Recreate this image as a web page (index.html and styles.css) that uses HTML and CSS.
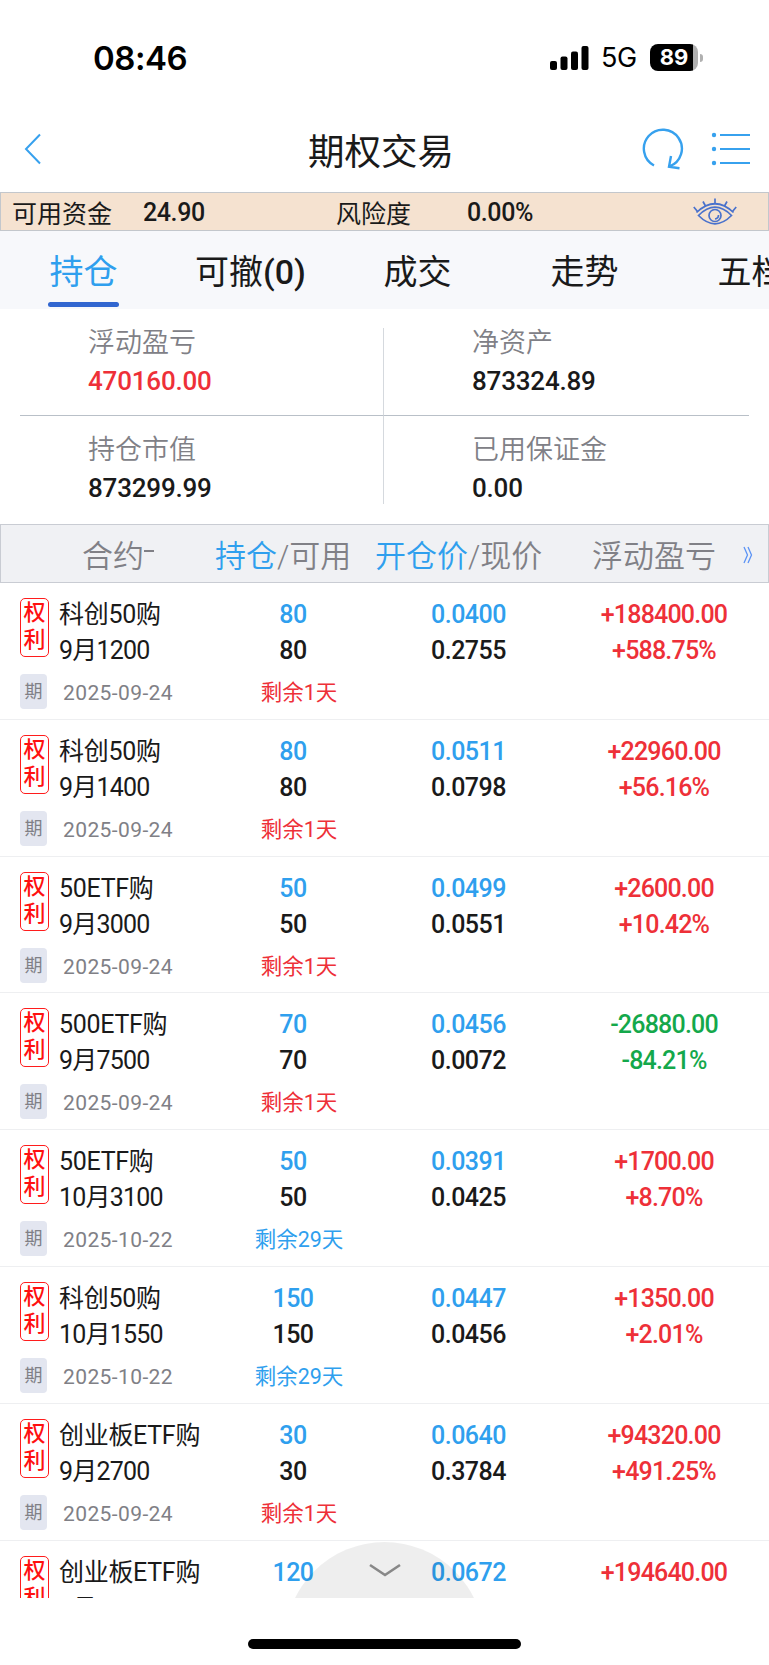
FILE: index.html
```
<!DOCTYPE html>
<html lang="zh-CN">
<head>
  <meta charset="UTF-8" />
  <meta name="viewport" content="width=device-width, initial-scale=1.0"/>
  <title>期权交易</title>
  <link rel="stylesheet" href="styles.css">
</head>
<body>
  <div class="status-bar">
    <span class="time">08:46</span>
    <div class="status-right">
      <svg class="signal" width="39" height="24" viewBox="0 0 39 24">
        <rect x="0" y="15" width="7" height="9" rx="2"/>
        <rect x="10.5" y="10.5" width="7" height="13.5" rx="2"/>
        <rect x="21" y="5.5" width="7" height="18.5" rx="2"/>
        <rect x="31.5" y="0" width="7" height="24" rx="2"/>
      </svg>
      <span class="network">5G</span>
      <div class="battery"><span>89</span></div>
      <i class="battery-cap"></i>
    </div>
  </div>

  <header class="nav-bar">
    <svg class="back" width="18" height="32" viewBox="0 0 18 32"><path d="M16 1.5 L2 16 L16 30.5"/></svg>
    <h1>期权交易</h1>
    <svg class="refresh" width="42" height="44" viewBox="0 0 42 44"><path d="M12 38.500 A19 19 0 1 1 27.500 39.500 M29 29 L27 39.800 L37.500 41.200"/></svg>
    <svg class="menu" width="40" height="34" viewBox="0 0 40 34">
      <path d="M9 3 H39 M9 17 H39 M9 31 H39"/>
      <circle cx="3" cy="3" r="2.2"/><circle cx="3" cy="17" r="2.2"/><circle cx="3" cy="31" r="2.2"/>
    </svg>
  </header>

  <div class="fund-bar">
    <span class="fund-label">可用资金</span>
    <span class="fund-value">24.90</span>
    <span class="risk-label">风险度</span>
    <span class="risk-value">0.00%</span>
    <svg class="eye" width="44" height="28" viewBox="0 0 44 28">
      <path d="M5.500 17.500 Q22 1 38.500 17.500 Q22 34 5.500 17.500 Z"/>
      <path d="M3.500 14.500 Q22 -3 40.500 14.500"/>
      <circle cx="22" cy="17.500" r="6"/>
      <path d="M22 21 Q25.500 20.500 25.500 17 M22 6 V0.500 M12.500 8 L10 3.500 M31.500 8 L34 3.500 M4.500 13.500 L0.800 9 M39.500 13.500 L43.200 9"/>
    </svg>
  </div>

  <nav class="tabs">
    <span class="tab active">持仓</span>
    <span class="tab">可撤<b>(0)</b></span>
    <span class="tab">成交</span>
    <span class="tab">走势</span>
    <span class="tab">五档</span>
  </nav>

  <section class="summary">
    <div class="cell"><label>浮动盈亏</label><strong class="red">470160.00</strong></div>
    <div class="cell"><label>净资产</label><strong>873324.89</strong></div>
    <div class="cell"><label>持仓市值</label><strong>873299.99</strong></div>
    <div class="cell"><label>已用保证金</label><strong>0.00</strong></div>
  </section>

  <div class="table-head">
    <span class="h-name">合约<i></i></span>
    <span class="h-hold"><em>持仓</em>/可用</span>
    <span class="h-price"><em>开仓价</em>/现价</span>
    <span class="h-profit">浮动盈亏</span>
    <svg class="more" width="10" height="18" viewBox="0 0 10 18"><path d="M1 1 L4.500 9 L1 17 M5 1 L8.500 9 L5 17"/></svg>
  </div>

  <main class="positions" id="positions"></main>

  <div class="home-area"><div class="home-indicator"></div></div>

<script>
  const positions = [
    { name: '科创50购', month: '9月1200', hold: 80, open: '0.0400', now: '0.2755', profit: '+188400.00', rate: '+588.75%', date: '2025-09-24', days: 1 },
    { name: '科创50购', month: '9月1400', hold: 80, open: '0.0511', now: '0.0798', profit: '+22960.00', rate: '+56.16%', date: '2025-09-24', days: 1 },
    { name: '50ETF购', month: '9月3000', hold: 50, open: '0.0499', now: '0.0551', profit: '+2600.00', rate: '+10.42%', date: '2025-09-24', days: 1 },
    { name: '500ETF购', month: '9月7500', hold: 70, open: '0.0456', now: '0.0072', profit: '-26880.00', rate: '-84.21%', date: '2025-09-24', days: 1 },
    { name: '50ETF购', month: '10月3100', hold: 50, open: '0.0391', now: '0.0425', profit: '+1700.00', rate: '+8.70%', date: '2025-10-22', days: 29 },
    { name: '科创50购', month: '10月1550', hold: 150, open: '0.0447', now: '0.0456', profit: '+1350.00', rate: '+2.01%', date: '2025-10-22', days: 29 },
    { name: '创业板ETF购', month: '9月2700', hold: 30, open: '0.0640', now: '0.3784', profit: '+94320.00', rate: '+491.25%', date: '2025-09-24', days: 1 },
    { name: '创业板ETF购', month: '9月2850', hold: 120, open: '0.0672', now: '0.2294', profit: '+194640.00', rate: '+241.37%' }
  ];

  const list = document.getElementById('positions');

  positions.forEach(p => {
    const row = document.createElement('div');
    row.classList.add('row');
    const color = p.profit[0] === '-' ? 'green' : 'red';
    const expire = p.date ? `
      <div class="expire">期</div>
      <div class="date">${p.date}</div>
      <div class="days ${p.days > 7 ? 'blue' : 'red'}">剩余${p.days}天</div>` : '';
    row.innerHTML = `
      <div class="tag">权<br>利</div>
      <div class="name">${p.name}<br><span class="month">${p.month}</span></div>
      <div class="hold"><span class="blue">${p.hold}</span><br>${p.hold}</div>
      <div class="price"><span class="blue">${p.open}</span><br>${p.now}</div>
      <div class="profit ${color}">${p.profit}<br>${p.rate}</div>
      ${expire}
    `;
    list.appendChild(row);
  });

  // pull-up handle over the list
  list.insertAdjacentHTML('beforeend', `
    <div class="pull">
      <svg width="34" height="15" viewBox="0 0 34 15"><path d="M2 2 L17 12 L32 2"/></svg>
    </div>`);
</script>
</body>
</html>
```
FILE: styles.css
```
* {
  box-sizing: border-box;
}

body {
  margin: 0;
  width: 769px;
  height: 1665px;
  overflow: hidden;
  background: #fff;
  color: #1a1a1a;
  font-family: Roboto, "Noto Sans CJK SC", sans-serif;
  font-size: 25px;
  white-space: nowrap;
}

svg {
  fill: none;
  stroke: #37a1ee;
  stroke-width: 2;
  flex: none;
}

.red { color: #ee3038; }
.green { color: #14a84b; }
.blue { color: #2f9fee; }

.status-bar {
  height: 108px;
  padding: 7px 66px 0 93px;
  display: flex;
  align-items: center;
  justify-content: space-between;
  font-family: Inter, sans-serif;
  color: #000;
}

.time {
  font-size: 33px;
  font-weight: 600;
  letter-spacing: -0.5px;
}

.status-right {
  display: flex;
  align-items: center;
}

.signal {
  fill: #000;
  stroke: none;
}

.network {
  margin-left: 12px;
  font-size: 27px;
  letter-spacing: -0.5px;
  width: 49px;
}

.battery {
  width: 48px;
  height: 27px;
  border-radius: 8px;
  background: linear-gradient(90deg, #000 90%, #b0b0b0 90%);
  color: #fff;
  font-size: 22px;
  font-weight: 700;
  line-height: 27px;
  text-align: center;
}

.battery-cap {
  width: 3px;
  height: 8px;
  margin-left: 2px;
  border-radius: 0 3px 3px 0;
  background: #b0b0b0;
}

.nav-bar {
  height: 84px;
  display: flex;
  align-items: center;
  padding: 0 18px 2px 24px;
}

.nav-bar h1 {
  flex: 1;
  margin: 1px 0 0 78px;
  text-align: center;
  font-size: 36.5px;
  font-weight: 400;
}

.refresh {
  stroke-width: 2.4;
  margin-right: 27px;
}

.menu circle {
  fill: #37a1ee;
  stroke: none;
}

.fund-bar {
  height: 39px;
  display: flex;
  align-items: center;
  padding: 0 31px 0 11px;
  background: #f5e2d0;
  border: 1px solid #c3c7cc;
}

.fund-label { width: 131px; }
.fund-value { width: 193px; }
.risk-label { width: 131px; }
.risk-value { flex: 1; }

.fund-value,
.risk-value {
  padding-top: 2px;
  font-weight: 500;
  letter-spacing: -0.4px;
}

.eye {
  stroke: #4a72cc;
  stroke-width: 1.7;
}

.tabs {
  height: 78px;
  display: flex;
  background: #f7f8fb;
  font-size: 34px;
  line-height: 82px;
  overflow: hidden;
}

.tab {
  flex: none;
  width: 167px;
  text-align: center;
}

.tab b {
  font-weight: 500;
}

.tab.active {
  color: #2f9fee;
  position: relative;
}

.tab.active::after {
  content: "";
  position: absolute;
  left: 48px;
  bottom: 2px;
  width: 71px;
  height: 5px;
  border-radius: 3px;
  background: #3166d0;
}

.summary {
  height: 215px;
  padding: 19px 20px;
  display: grid;
  grid-template-columns: 363px 366px;
  grid-template-rows: 88px 88px;
}

.cell {
  padding-left: 68px;
  display: flex;
  flex-direction: column;
}

.cell:nth-child(even) {
  border-left: 1px solid #d5d9de;
  padding-left: 88px;
}

.cell:nth-child(-n+2) {
  border-bottom: 1px solid #b9c0c8;
}

.cell:nth-child(n+3) {
  padding-top: 19px;
}

.cell label {
  margin-top: -5px;
  color: #808086;
  font-size: 27px;
  font-weight: 350;
  line-height: 40px;
}

.cell strong {
  font-size: 26px;
  font-weight: 500;
  line-height: 37px;
  letter-spacing: -0.2px;
}

.table-head {
  height: 59px;
  display: flex;
  align-items: center;
  background: #f0f1f4;
  border: 1px solid #c9ccd3;
  color: #808086;
  font-size: 31px;
  font-weight: 350;
}

.table-head em {
  font-style: normal;
  color: #2f9fee;
}

.h-name {
  width: 214px;
  padding-left: 81px;
  display: flex;
  align-items: center;
}

.h-name i {
  width: 10px;
  height: 2px;
  margin-top: -5px;
  background: #808086;
}

.h-hold { width: 160px; }
.h-price { width: 217px; }
.h-profit { width: 151px; }

.more {
  margin-top: 3px;
  stroke: #5b93f5;
  stroke-width: 1.3;
}

.positions {
  height: 1015px;
  overflow: hidden;
  position: relative;
}

.row {
  height: 136.8px;
  padding: 14px 0 0 20px;
  display: grid;
  grid-template-columns: 39px 154px 160px 191px 200px;
  grid-template-rows: 72px 50px;
  border-bottom: 1px solid #eeeff1;
  line-height: 36px;
  font-weight: 500;
}

.name {
  font-weight: 400;
  letter-spacing: -0.3px;
}

.month {
  letter-spacing: -0.8px;
}

.hold,
.price {
  text-align: center;
  letter-spacing: -0.5px;
}

.profit {
  text-align: center;
  letter-spacing: -0.8px;
}

.tag {
  width: 29px;
  height: 59px;
  margin-top: 1px;
  border: 1.5px solid #ff1c1c;
  border-radius: 5px;
  color: #ff1010;
  font-size: 22px;
  line-height: 27px;
  text-align: center;
}

.expire {
  width: 27px;
  height: 35px;
  margin-top: 5px;
  border-radius: 4px;
  background: #e3e6f0;
  color: #808086;
  font-size: 18px;
  font-weight: 400;
  line-height: 35px;
  text-align: center;
}

.date {
  padding: 6px 0 0 4px;
  color: #808086;
  font-size: 21px;
  font-weight: 400;
  letter-spacing: 0.4px;
}

.days {
  padding: 6px 0 0 12px;
  font-size: 21.5px;
  font-weight: 400;
  text-align: center;
}

.pull {
  position: absolute;
  left: 285px;
  top: 959px;
  width: 199px;
  height: 199px;
  padding-top: 21px;
  border-radius: 50%;
  background: rgba(0, 0, 0, 0.065);
  text-align: center;
  line-height: 0;
}

.pull svg {
  stroke: #888;
  stroke-width: 2.6;
}

.home-area {
  height: 67px;
  padding-top: 41px;
}

.home-indicator {
  width: 273px;
  height: 10px;
  margin: 0 auto;
  border-radius: 5px;
  background: #000;
}
```
